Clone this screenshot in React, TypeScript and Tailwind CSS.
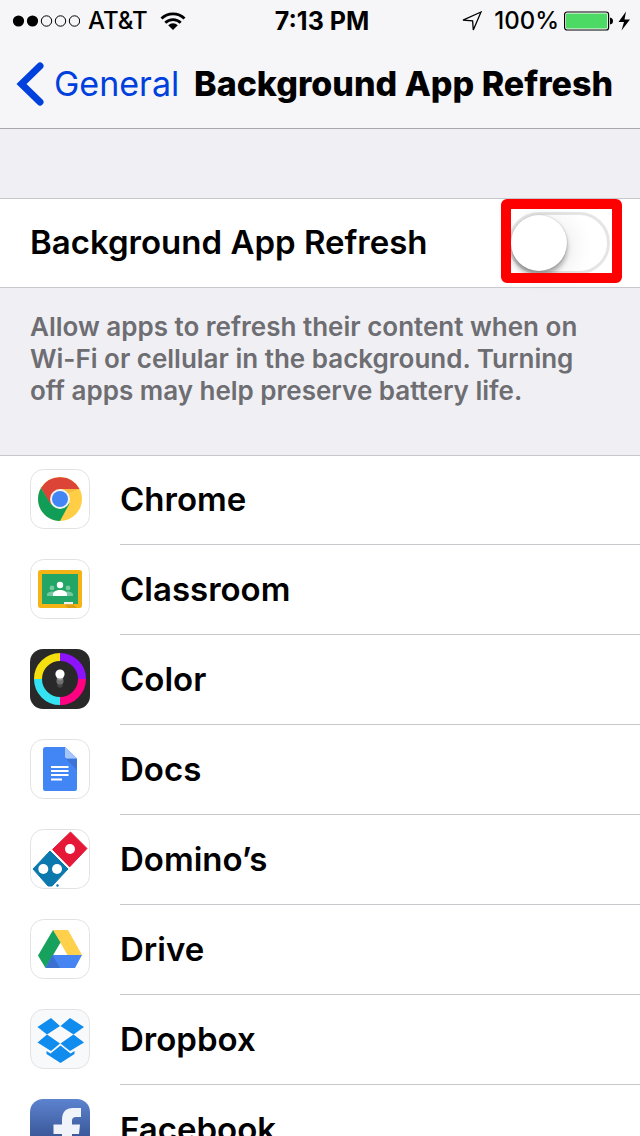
import { useState, type ReactNode } from 'react';

const tile = 'size-[60px] shrink-0';

function Tile({ children, fill = '#ffffff' }: { children: ReactNode; fill?: string }) {
  return (
    <svg viewBox="0 0 60 60" className={tile} aria-hidden="true">
      <rect x="0.5" y="0.5" width="59" height="59" rx="13" fill={fill} stroke="#e2e2e4" />
      {children}
    </svg>
  );
}

function ChromeIcon() {
  return (
    <Tile>
      <circle cx="30" cy="30" r="22" fill="#ffce44" />
      <path d="M30 30 L30 20 L49.5 20 A22 22 0 0 0 11 19 L20.5 35.5 Z" fill="#db4437" />
      <path d="M11 19 A22 22 0 0 0 30 52 L39.5 34.5 L30 30 L21 35.5 Z" fill="#0f9d58" />
      <path d="M30 20 H49.5 L38 24 Z" fill="#e9a93a" opacity="0.5" />
      <circle cx="30" cy="30" r="10" fill="#f4f4f4" />
      <circle cx="30" cy="30" r="8" fill="#4285f4" />
    </Tile>
  );
}

function ClassroomIcon() {
  return (
    <Tile>
      <rect x="8" y="11" width="44" height="38" rx="2.5" fill="#f4b416" />
      <rect x="12" y="15" width="36" height="30" fill="#23a566" />
      <g fill="#74c9a0">
        <circle cx="22" cy="29" r="2.4" />
        <circle cx="38" cy="29" r="2.4" />
        <path d="M17 37 v-1.5 c0-2 3-3 5-3 s5 1 5 3 V37 Z M33 37 v-1.5 c0-2 3-3 5-3 s5 1 5 3 V37 Z" />
      </g>
      <circle cx="30" cy="26" r="3.2" fill="#fff" />
      <path d="M23 37 v-2 c0-2.6 4-4 7-4 s7 1.4 7 4 v2 Z" fill="#fff" />
      <path d="M34 45 h9 l4 4 H38 Z" fill="#dc9f12" />
      <rect x="34" y="43" width="9" height="2.2" fill="#f1f1f1" />
    </Tile>
  );
}

function ColorIcon() {
  return (
    <svg viewBox="0 0 60 60" className={tile} aria-hidden="true">
      <rect width="60" height="60" rx="13" fill="#292929" />
      <g fill="none" strokeWidth="8">
        <path d="M30 8 A22 22 0 0 1 52 30" stroke="#8c13fb" />
        <path d="M52 30 A22 22 0 0 1 30 52" stroke="#ff0181" />
        <path d="M30 52 A22 22 0 0 1 8 30" stroke="#35e2f2" />
        <path d="M8 30 A22 22 0 0 1 30 8" stroke="#f6df0e" />
      </g>
      <circle cx="30" cy="36" r="2.7" fill="#454545" />
      <circle cx="30" cy="32" r="3.6" fill="#707070" />
      <circle cx="30" cy="28" r="3.4" fill="#929292" />
      <circle cx="30" cy="25" r="4.6" fill="#fff" />
    </svg>
  );
}

function DocsIcon() {
  return (
    <Tile>
      <path d="M15.5 8 H35 L47 19.5 V49.5 Q47 52 44.5 52 H15.5 Q13 52 13 49.5 V10.5 Q13 8 15.5 8 Z" fill="#4285f4" />
      <path d="M36 20 L47 31 V20 Z" fill="#3b73d9" />
      <path d="M35 8 L47 19.5 H37 Q35 19.5 35 17.5 Z" fill="#a6c5fa" />
      <path d="M21 27 h17.5 v2 H21 Z M21 31 h17.5 v2 H21 Z M21 35 h17.5 v2 H21 Z M21 39.5 h11 v2 H21 Z" fill="#fff" />
    </Tile>
  );
}

function DominosIcon() {
  return (
    <Tile>
      <path d="M40.5 3 L57 19.5 L39.5 38 L22.5 20.5 Z" fill="#e51837" stroke="#e51837" strokeLinejoin="round" />
      <path d="M20 22 L38 40 L22 57 H18 L3 40 Z" fill="#0b78ae" stroke="#0b78ae" strokeLinejoin="round" />
      <path d="M20.5 20.5 L39.5 39.5" stroke="#fff" strokeWidth="1.5" />
      <g fill="#fff">
        <circle cx="40" cy="20" r="5" />
        <circle cx="13.3" cy="40" r="5" />
        <circle cx="27" cy="40" r="5" />
      </g>
      <circle cx="27.5" cy="56.5" r="1.2" fill="#0b78ae" />
    </Tile>
  );
}

function DriveIcon() {
  return (
    <Tile>
      <path d="M23 11 H38 L52 36 H37.5 Z" fill="#ffd04b" />
      <path d="M23 11 L30.5 23.5 L15.5 49 L8 36.5 Z" fill="#16a15c" />
      <path d="M22.5 36 H52 L45 49 H15.5 Z" fill="#4684f2" />
      <path d="M22.5 36 L30 49 H15.5 Z" fill="#3a70d0" />
    </Tile>
  );
}

function DropboxIcon() {
  return (
    <Tile fill="#f8f9fb">
      <g fill="#108bee">
        <path d="M21 9 L30 17 L17 25.5 L7.5 18 Z" />
        <path d="M40 9 L54 18 L43.5 25.5 L30.5 17 Z" />
        <path d="M17 25.5 L30 34.5 L21 42 L7.5 33.5 Z" />
        <path d="M43.5 25.5 L54 33.5 L40 42 L30.5 34.5 Z" />
        <path d="M30.5 36.5 L40.5 44.5 L44.5 42 V45 L30.5 54 L16.5 45 V42 L20.5 44.5 Z" />
      </g>
    </Tile>
  );
}

function FacebookIcon() {
  return (
    <svg viewBox="0 0 60 60" className={tile} aria-hidden="true">
      <defs>
        <linearGradient id="fb" x1="0" y1="0" x2="0" y2="1">
          <stop offset="0" stopColor="#5d83cf" />
          <stop offset="0.6" stopColor="#3c5a9c" />
          <stop offset="1" stopColor="#2f4a86" />
        </linearGradient>
      </defs>
      <rect width="60" height="60" rx="13" fill="url(#fb)" />
      <path d="M32 60 V35 H23.5 V25.5 H32 V21 Q32 9 43 9 H51 V18 H46 Q42 18 42 21.5 V25.5 H50 L49 35 H42 V60 Z" fill="#f0f3fa" />
    </svg>
  );
}

const apps: { name: string; icon: ReactNode }[] = [
  { name: 'Chrome', icon: <ChromeIcon /> },
  { name: 'Classroom', icon: <ClassroomIcon /> },
  { name: 'Color', icon: <ColorIcon /> },
  { name: 'Docs', icon: <DocsIcon /> },
  { name: 'Domino’s', icon: <DominosIcon /> },
  { name: 'Drive', icon: <DriveIcon /> },
  { name: 'Dropbox', icon: <DropboxIcon /> },
  { name: 'Facebook', icon: <FacebookIcon /> },
];

function StatusBar() {
  return (
    <div className="grid h-[42px] grid-cols-[1fr_auto_1fr] items-center pr-2 pl-3 text-[24px] leading-10 font-medium">
      <div className="flex items-center gap-2">
        <svg viewBox="0 0 68 12" className="h-3 w-[68px]" aria-hidden="true">
          <circle cx="6.5" cy="6" r="5.6" />
          <circle cx="20.5" cy="6" r="5.6" />
          <g fill="none" stroke="#000">
            <circle cx="34.5" cy="6" r="5.2" />
            <circle cx="48.5" cy="6" r="5.2" />
            <circle cx="62.5" cy="6" r="5.2" />
          </g>
        </svg>
        <span>AT&amp;T</span>
        <svg viewBox="0 0 26 20" className="ml-1 h-5 w-[26px]" aria-hidden="true">
          <g fill="none" stroke="#000" strokeWidth="2.8">
            <path d="M1.5 7.6 A16.5 16.5 0 0 1 24.5 7.6" />
            <path d="M5.3 11.8 A11 11 0 0 1 20.7 11.8" />
          </g>
          <path d="M8.2 14.2 A7 7 0 0 1 17.8 14.2 L13 19 Z" />
        </svg>
      </div>
      <span className="text-[25px] font-bold">7:13 PM</span>
      <div className="flex items-center justify-end">
        <svg viewBox="0 0 20 20" className="mr-3 size-5" aria-hidden="true">
          <path d="M19 1 L1 9.2 L10.6 9.8 L11.3 19 Z" fill="none" stroke="#000" strokeWidth="1.3" />
        </svg>
        <span className="mr-[5px]">100%</span>
        <svg viewBox="0 0 68 20" className="h-5 w-[68px]" aria-hidden="true">
          <rect x="0.6" y="1" width="44" height="18" rx="2.6" fill="#fff" stroke="#000" strokeWidth="1.2" />
          <rect x="2" y="2.4" width="41.2" height="15.2" rx="1" fill="#4cd964" />
          <path d="M46 6.5 Q49 7 49 10 Q49 13 46 13.5 Z" />
          <path d="M62 0.5 L54.5 11 H60 L57.5 19.5 L66 8.5 H60.5 Z" />
        </svg>
      </div>
    </div>
  );
}

export default function App() {
  const [enabled, setEnabled] = useState(false);

  return (
    <div className="flex h-screen flex-col overflow-hidden bg-[#efeff4] font-['Inter','Liberation_Sans',sans-serif] text-black">
      <header className="shrink-0 border-b border-[#a7a7ac] bg-[#f6f6f8]">
        <StatusBar />
        <nav className="flex h-[86px] items-center pr-[27px] pb-[3px] pl-4">
          <a href="#general" className="flex items-center gap-2 text-[34px] text-[#0040dd]">
            <svg viewBox="0 0 30 46" className="h-[46px] w-[30px]" aria-hidden="true">
              <path d="M24 5 L5.5 23 L24 41" fill="none" stroke="#0040dd" strokeWidth="7" strokeLinecap="round" />
            </svg>
            General
          </a>
          <h1 className="flex-1 text-right text-[34px] font-extrabold whitespace-nowrap">Background App Refresh</h1>
        </nav>
      </header>

      <main className="min-h-0 flex-1 overflow-y-auto pt-[69px] [scrollbar-width:none]">
        <div className="flex h-[90px] items-center justify-between border-y border-[#c8c7cc] bg-white pr-[30px] pl-[30px]">
          <label htmlFor="refresh" className="text-[33px] font-semibold">
            Background App Refresh
          </label>
          <div className="relative flex">
            <input
              id="refresh"
              type="checkbox"
              role="switch"
              checked={enabled}
              onChange={(e) => setEnabled(e.target.checked)}
              className="h-[62px] w-[102px] appearance-none rounded-full border-[3px] border-[#e5e5e5] bg-white before:block before:size-14 before:rounded-full before:bg-white before:shadow-[0_5px_5px_rgba(0,0,0,0.3),0_0_2px_rgba(0,0,0,0.25),6px_4px_24px_rgba(0,0,0,0.09)] checked:border-[#4cd964] checked:bg-[#4cd964] checked:before:translate-x-10"
            />
            <div className="pointer-events-none absolute -top-[13px] -right-3 -bottom-[9px] -left-[7px] rounded-md border-10 border-[#ff0000]" />
          </div>
        </div>

        <p className="pt-[23px] pr-12 pb-12 pl-[30px] text-[26px] leading-8 font-semibold text-[#6d6d72]">
          Allow apps to refresh their content when on Wi-Fi or cellular in the background. Turning off apps may help preserve battery life.
        </p>

        <ul className="border-t border-[#c8c7cc] bg-white">
          {apps.map((app) => (
            <li key={app.name} className="flex h-[90px] gap-[30px] pl-[30px] first:h-[89px]">
              <div className="flex items-end pb-4">{app.icon}</div>
              <span className="flex flex-1 items-end border-b border-[#c8c7cc] pb-[15px] text-[33px] leading-[60px] font-semibold">{app.name}</span>
            </li>
          ))}
        </ul>
      </main>
    </div>
  );
}
